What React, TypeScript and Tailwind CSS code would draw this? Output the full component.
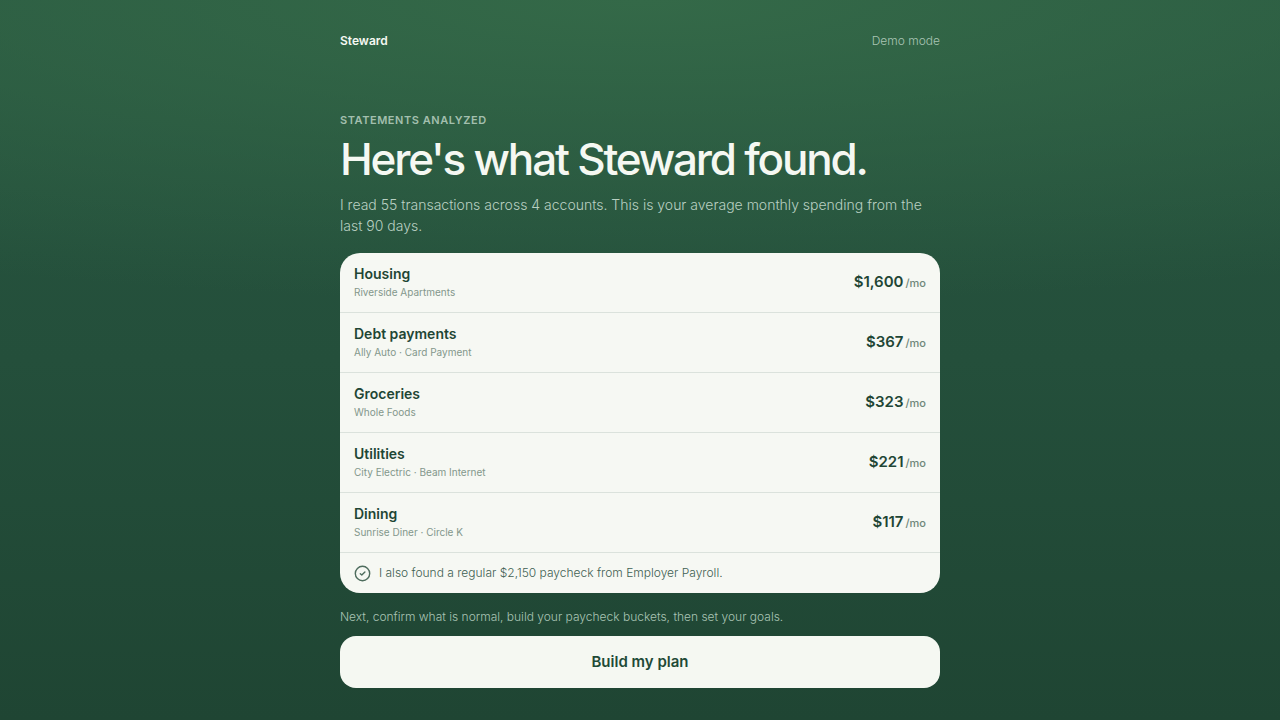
import React from "react";

type Category = {
  name: string;
  merchants: string;
  amount: string;
};

const categories: Category[] = [
  { name: "Housing", merchants: "Riverside Apartments", amount: "$1,600" },
  { name: "Debt payments", merchants: "Ally Auto · Card Payment", amount: "$367" },
  { name: "Groceries", merchants: "Whole Foods", amount: "$323" },
  { name: "Utilities", merchants: "City Electric · Beam Internet", amount: "$221" },
  { name: "Dining", merchants: "Sunrise Diner · Circle K", amount: "$117" },
];

const CheckBadge = () => (
  <svg
    className="size-[17px] shrink-0"
    viewBox="0 0 17 17"
    fill="none"
    stroke="currentColor"
    strokeWidth="1.4"
    strokeLinecap="round"
    strokeLinejoin="round"
    aria-hidden="true"
  >
    <circle cx="8.5" cy="8.5" r="7.2" />
    <path d="M6.3 8.7 7.8 10.1 10.9 7.1" />
  </svg>
);

const CategoryRow = ({ name, merchants, amount }: Category) => (
  <li className="flex items-center justify-between gap-4 border-b border-[#dbe2dc] px-3.5 py-3 last:border-b-0">
    <div>
      <h2 className="text-[14px] leading-[18px] font-semibold text-[#1f4635]">{name}</h2>
      <p className="mt-0.5 text-[10px] leading-[15px] text-[#83978b]">{merchants}</p>
    </div>
    <p className="text-[15px] font-semibold whitespace-nowrap text-[#1f4635]">
      {amount}
      <span className="ml-0.5 text-[11px] font-medium text-[#6f877a]">/mo</span>
    </p>
  </li>
);

export default function App() {
  return (
    <div className="min-h-screen bg-[#1f4533] bg-[radial-gradient(ellipse_120%_42%_at_50%_0%,#346948,rgba(52,105,72,0)),linear-gradient(180deg,#27553f_0%,#244f3b_50%,#1f4533_100%)] px-5 font-['Inter','Noto_Sans',sans-serif]">
      <div className="mx-auto flex min-h-screen w-full max-w-[600px] flex-col py-8">
        <header className="flex items-center justify-between text-[12px] leading-[18px]">
          <span className="font-semibold text-[#f5f8f2]">Steward</span>
          <span className="font-light text-[#a9c4b4]">Demo mode</span>
        </header>

        <main className="flex flex-1 flex-col pt-16">
          <p className="text-[11px] leading-3 font-semibold tracking-wider text-[#a3bfae] uppercase">
            Statements analyzed
          </p>
          <h1 className="mt-2 text-[44px] leading-[50px] font-medium tracking-tighter text-[#f5f8f2]">
            Here's what Steward found.
          </h1>
          <p className="mt-2.5 text-[14px] leading-[21px] font-light text-[#b9d0c2]">
            I read 55 transactions across 4 accounts. This is your average monthly spending from the
            last 90 days.
          </p>

          <section className="mt-[17px] overflow-hidden rounded-[20px] bg-[#f6f8f3]">
            <ul>
              {categories.map((category) => (
                <CategoryRow key={category.name} {...category} />
              ))}
            </ul>
            <div className="flex items-center gap-2 border-t border-[#dbe2dc] px-3.5 py-[11px] text-[12px] leading-[18px] text-[#4f6d5e]">
              <CheckBadge />
              <p className="font-light text-[#3f6052]">
                I also found a regular $2,150 paycheck from Employer Payroll.
              </p>
            </div>
          </section>

          <p className="mt-[15px] text-[12px] leading-[18px] font-light text-[#a9c4b4]">
            Next, confirm what is normal, build your paycheck buckets, then set your goals.
          </p>
          <button
            type="button"
            className="mt-2.5 h-[52px] w-full cursor-pointer rounded-2xl bg-[#f5f8f2] text-[15px] font-semibold text-[#1f4a37]"
          >
            Build my plan
          </button>
        </main>
      </div>
    </div>
  );
}
